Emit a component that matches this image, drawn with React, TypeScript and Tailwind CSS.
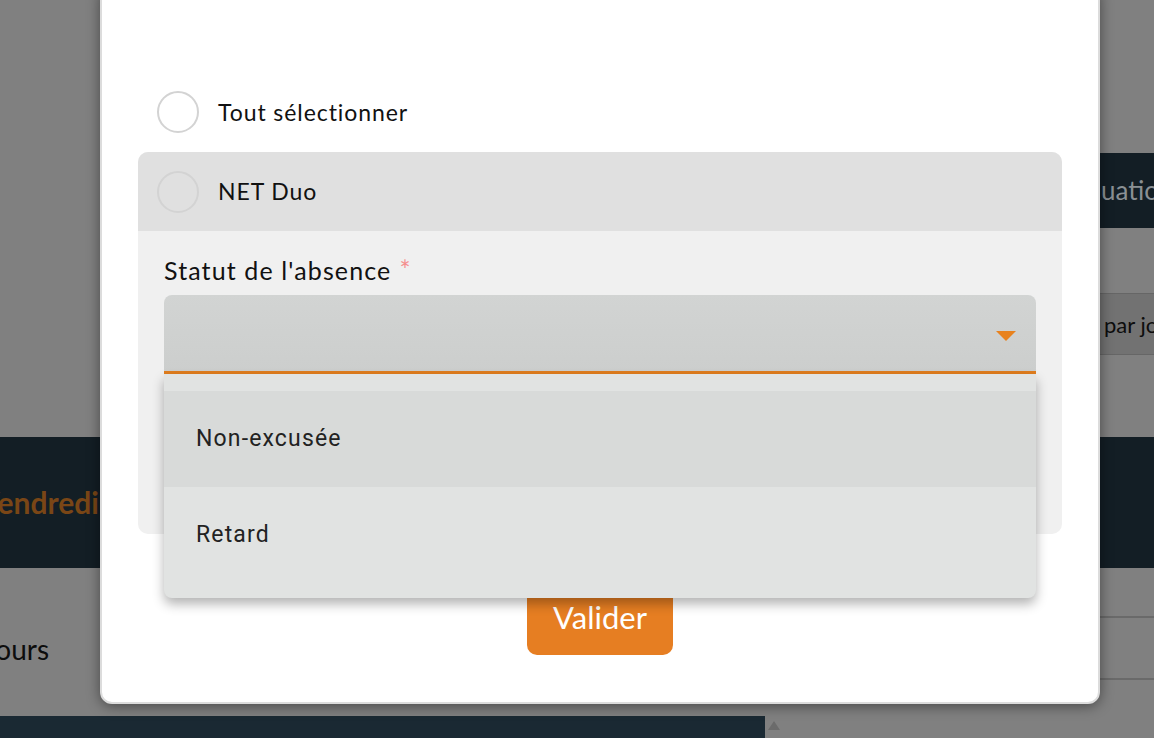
import React from 'react'

function Radio() {
  return <span className="block h-[42px] w-[42px] shrink-0 rounded-full border-2 border-[#d3d3d3]" />
}

export default function App() {
  return (
    <div className="relative h-[738px] w-full overflow-hidden bg-[#808080] font-['Lato',sans-serif]">
      {/* Page behind the overlay */}
      <div className="flex flex-col">
        <div className="h-[153px]" />
        <div className="flex h-[75px] justify-end">
          <div className="flex w-[420px] items-center justify-end bg-[#131e25]">
            <span className="w-[54px] overflow-hidden whitespace-nowrap pl-[1px] text-[26px] text-[#8a9094]">uations</span>
          </div>
        </div>
        <div className="h-[65px]" />
        <div className="flex h-[62px] justify-end">
          <div className="flex w-[54px] items-center overflow-hidden whitespace-nowrap border-y border-[#666] bg-[#727272] pl-[4px] text-[22px] text-[#0d0d0d]">
            par jour
          </div>
        </div>
        <div className="h-[82px]" />
        <div className="flex h-[131px] items-center bg-[#131e25]">
          <span className="-ml-[21px] text-[30px] font-bold text-[#7a4616]">Vendredi</span>
        </div>
        <div className="flex h-[50px] justify-end">
          <div className="w-[54px] border-b-2 border-[#6a6a6a]" />
        </div>
        <div className="flex h-[62px] items-center justify-between">
          <span className="-ml-[16px] text-[28px] text-[#0d0d0d]">Jours</span>
          <div className="h-full w-[54px] border-b-2 border-[#6a6a6a]" />
        </div>
        <div className="h-[36px]" />
        <div className="flex h-[22px] items-start">
          <div className="h-full w-[765px] bg-[#1a2933]" />
          <svg width="14" height="12" viewBox="0 0 14 12" className="ml-[2px] mt-[4px]">
            <path d="M7 1 L13 10 L1 10 Z" fill="#6b6b6b" />
          </svg>
        </div>
      </div>

      {/* Modal */}
      <div className="absolute left-[100px] top-[-14px] flex h-[718px] w-[1000px] flex-col rounded-[12px] border-2 border-[#dcdcdc] bg-white px-[36px] pt-[84px] shadow-[0_2px_14px_rgba(0,0,0,0.45)]">
        <div className="flex h-[80px] items-center gap-[19px] px-[19px]">
          <Radio />
          <span className="text-[23px] tracking-[0.04em] text-[#111]">Tout sélectionner</span>
        </div>

        <div className="relative rounded-[10px] bg-[#f0f0f0]">
          <div className="flex h-[79px] items-center gap-[19px] rounded-t-[10px] bg-[#e0e0e0] px-[19px]">
            <Radio />
            <span className="text-[23px] tracking-[0.04em] text-[#111]">NET Duo</span>
          </div>
          <div className="h-[303px] px-[26px] pt-[26px]">
            <div className="flex h-[28px] items-center text-[25px] tracking-[0.045em] text-[#111]">
              Statut de l'absence
              <span className="ml-[8px] mt-[-2px] text-[26px] leading-none text-[#f58f8f]">*</span>
            </div>
            <div className="mt-[10px] flex h-[79px] items-center justify-end rounded-t-[8px] border-b-[3px] border-[#e07d1d] bg-gradient-to-b from-[#d2d4d3] to-[#cccecd] pr-[20px]">
              <svg width="20" height="10" viewBox="0 0 20 10" className="mt-[6px]">
                <path d="M0 0 H20 L10 10 Z" fill="#e8821e" />
              </svg>
            </div>
          </div>

          {/* Dropdown */}
          <div className="absolute left-[26px] top-[222px] z-10 w-[872px] rounded-b-[8px] bg-[#e1e3e2] pb-[15px] pt-[17px] font-['Roboto',sans-serif] shadow-[0_6px_12px_rgba(0,0,0,0.3)]">
            <div className="flex h-[96px] items-center bg-[#d8dad9] px-[32px] text-[23px] tracking-[0.05em] text-[#222]">
              Non-excusée
            </div>
            <div className="flex h-[96px] items-center px-[32px] text-[23px] tracking-[0.05em] text-[#222]">
              Retard
            </div>
          </div>
        </div>

        <div className="mt-[46px] flex justify-center">
          <button className="flex h-[75px] w-[146px] items-center justify-center rounded-[10px] bg-[#e67e22] text-[31px] text-white">
            Valider
          </button>
        </div>
      </div>
    </div>
  )
}
